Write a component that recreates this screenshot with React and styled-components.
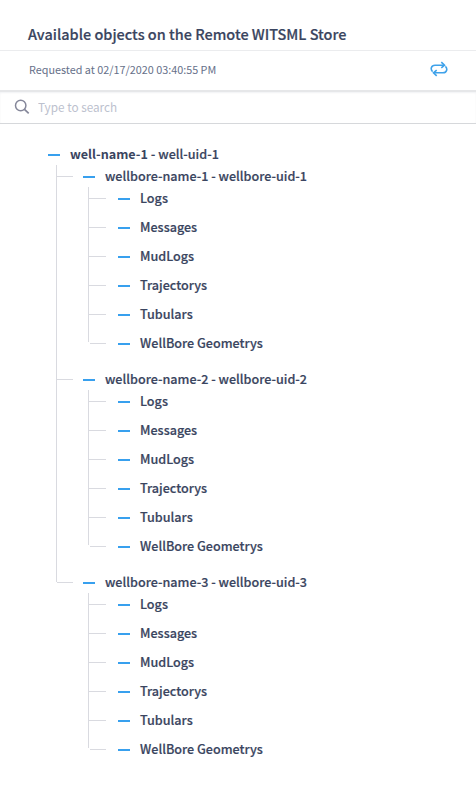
import React from "react";
import styled, { createGlobalStyle } from "styled-components";

const GlobalStyle = createGlobalStyle`
  * { box-sizing: border-box; }
  body {
    margin: 0;
    background: #fff;
    color: #3a4560;
    font-family: "Noto Sans CJK SC", "Noto Sans", sans-serif;
  }
`;

const Panel = styled.main`
  display: flex;
  flex-direction: column;
  width: 100%;
  height: 789px;
  overflow: hidden;
`;

const Header = styled.header`
  height: 51px;
  padding: 24px 28px 0;
  border-bottom: 1px solid #ebecee;
`;

const Title = styled.h1`
  margin: 0;
  font-size: 14.47px;
  font-weight: 500;
  line-height: 20px;
  white-space: nowrap;
  -webkit-text-stroke: 0.18px currentColor;
`;

const RequestBar = styled.section`
  display: flex;
  justify-content: space-between;
  height: 39px;
  padding: 10px 28px 0 29px;
`;

const RequestTime = styled.span`
  color: #667089;
  font-size: 10.82px;
  line-height: 16px;
`;

const RefreshButton = styled.button`
  display: flex;
  align-items: flex-start;
  padding: 0;
  border: 0;
  background: none;
  color: #3fa2ea;
`;

const SearchBar = styled.label`
  display: flex;
  align-items: center;
  gap: 8px;
  height: 34px;
  padding: 0 14px 2px;
  border-top: 2px solid #e6e7e9;
  border-bottom: 1px solid #d6d8db;
  box-shadow: inset 0 1px 2px #f1f2f4;
  color: #85879a;
`;

const SearchInput = styled.input`
  flex: 1;
  padding: 0;
  border: 0;
  outline: 0;
  background: none;
  font: 400 11.75px/18px "Noto Sans CJK SC", "Noto Sans", sans-serif;
  &::placeholder { color: #bcc1ce; opacity: 1; }
`;

const Tree = styled.div`
  padding: 19px 0 0 48px;
`;

const Row = styled.div`
  display: flex;
  align-items: center;
  height: 22px;
`;

const Dash = styled.span`
  width: 12px;
  height: 2px;
  margin: 2px 10px 0 0;
  background: #38a0ee;
`;

const Label = styled.span`
  font-size: 12.6px;
  font-weight: 500;
  line-height: 22px;
  white-space: nowrap;
  -webkit-text-stroke: 0.18px currentColor;
`;

const Strong = styled.b`
  font-weight: 700;
  -webkit-text-stroke: 0;
`;

const Children = styled.div`
  display: flex;
  margin-left: ${(p) => p.$indent}px;
`;

const Rail = styled.span`
  width: 1px;
  margin-bottom: ${(p) => p.$trim}px;
  background: #d9dae0;
`;

const Nodes = styled.div`
  display: flex;
  flex-direction: column;
  gap: ${(p) => p.$gap}px;
`;

const Branch = styled.span`
  width: ${(p) => p.$length}px;
  height: 1px;
  margin: 0 ${(p) => p.$after}px 0 ${(p) => p.$before || 0}px;
  background: #d9dae0;
`;

const SearchIcon = () => (
  <svg width="16" height="16" viewBox="0 0 16 16" fill="none" stroke="currentColor">
    <circle cx="6.7" cy="6.5" r="5.2" strokeWidth="1.5" />
    <path d="M10.5 10.3 14.7 14.3" strokeWidth="1.7" />
  </svg>
);

const RefreshIcon = () => (
  <svg width="18" height="16" viewBox="0 0 18 16" fill="none" stroke="currentColor" strokeWidth="1.6">
    <path d="M2.6 10.6C.1 8.2 1.2 4.2 5 4.2H14.2" />
    <path d="M11.3 1.1 14.5 4.2 11.3 6.9" />
    <path d="M15.4 5.4C17.9 7.8 16.8 11.8 13 11.8H3.8" />
    <path d="M6.7 9.1 3.5 11.8 6.7 14.9" />
  </svg>
);

const wellbores = [1, 2, 3];
const objects = ["Logs", "Messages", "MudLogs", "Trajectorys", "Tubulars", "WellBore Geometrys"];

const Wellbore = ({ id }) => (
  <div>
    <Row>
      <Branch $length={16} $after={10} />
      <Dash />
      <Label>{`wellbore-name-${id} - wellbore-uid-${id}`}</Label>
    </Row>
    <Children $indent={31}>
      <Rail $trim={12} />
      <Nodes $gap={7}>
        {objects.map((name, i) => {
          const last = i === objects.length - 1;
          return (
            <Row key={name}>
              <Branch $length={last ? 16 : 17} $before={last ? 1 : 0} $after={12} />
              <Dash />
              <Label>{name}</Label>
            </Row>
          );
        })}
      </Nodes>
    </Children>
  </div>
);

export default function App() {
  return (
    <>
      <GlobalStyle />
      <Panel>
        <Header>
          <Title>Available objects on the Remote WITSML Store</Title>
        </Header>
        <RequestBar>
          <RequestTime>Requested at 02/17/2020 03:40:55 PM</RequestTime>
          <RefreshButton aria-label="Refresh">
            <RefreshIcon />
          </RefreshButton>
        </RequestBar>
        <SearchBar>
          <SearchIcon />
          <SearchInput placeholder="Type to search" />
        </SearchBar>
        <Tree>
          <Row>
            <Dash />
            <Label><Strong>well-name-1 - </Strong>well-uid-1</Label>
          </Row>
          <Children $indent={8}>
            <Rail $trim={178} />
            <Nodes $gap={14}>
              {wellbores.map((id) => <Wellbore key={id} id={id} />)}
            </Nodes>
          </Children>
        </Tree>
      </Panel>
    </>
  );
}
